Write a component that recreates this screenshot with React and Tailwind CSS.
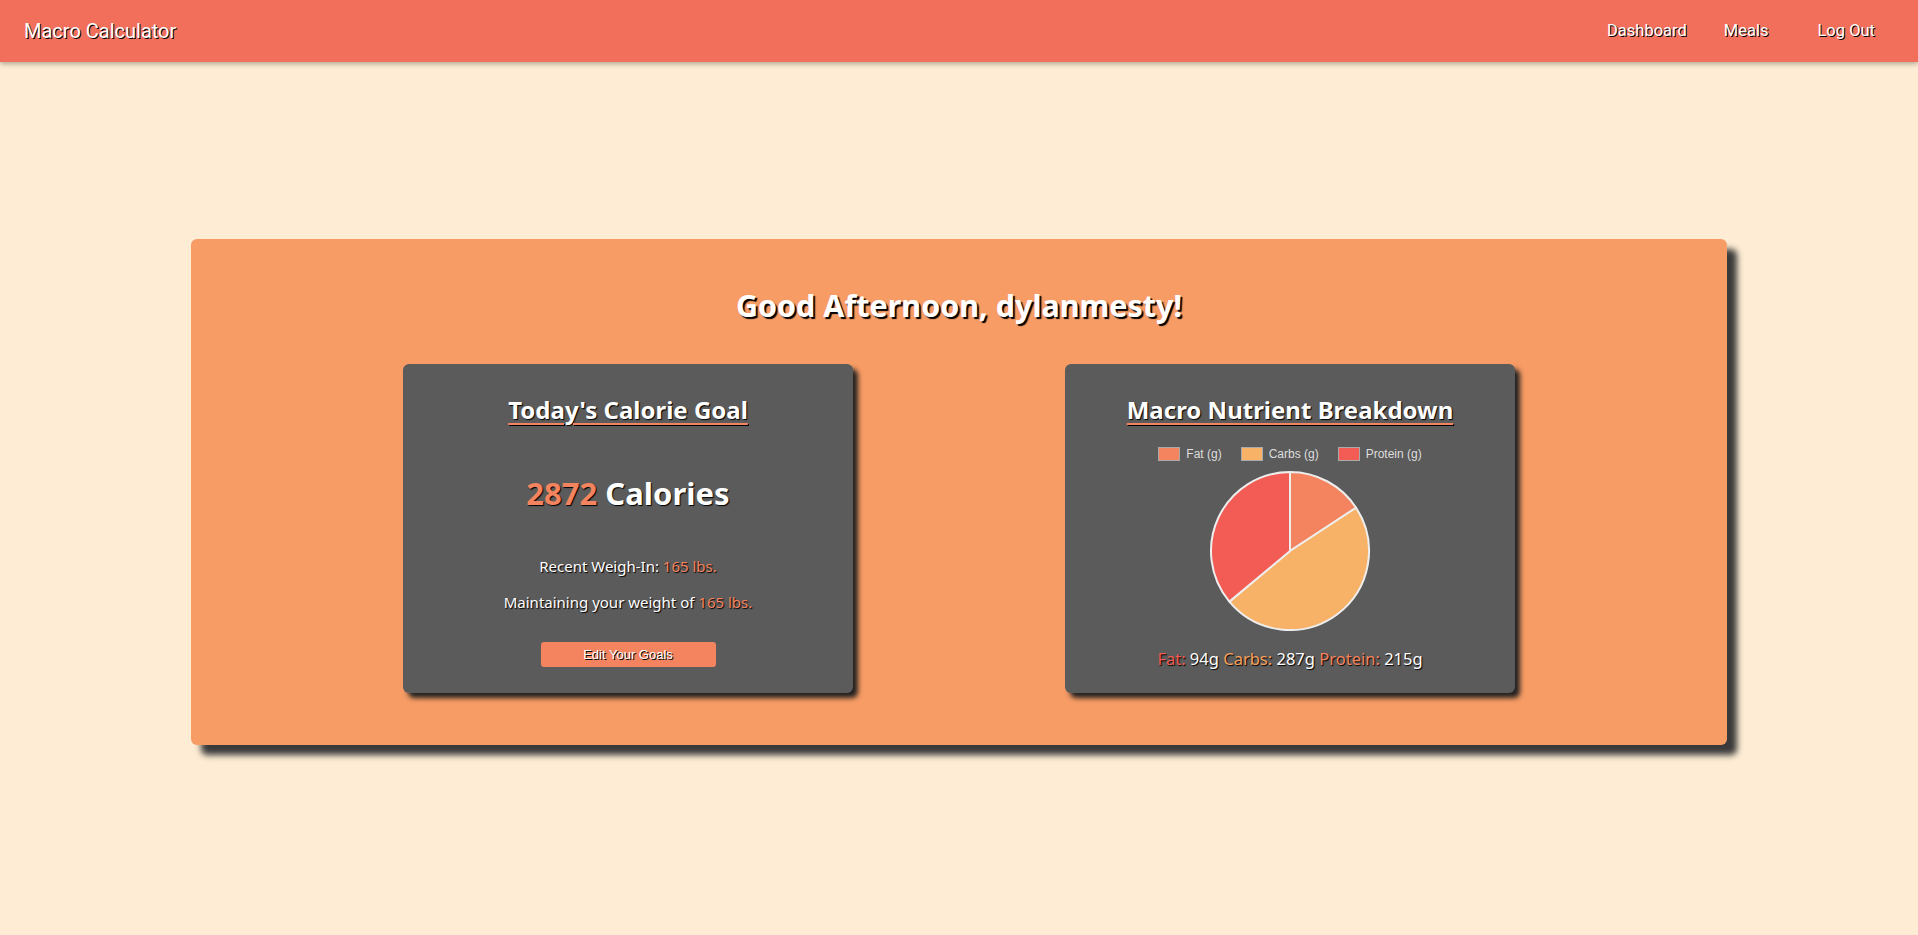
const macros = [
  { label: 'Fat (g)', color: '#F4845F' },
  { label: 'Carbs (g)', color: '#F7B267' },
  { label: 'Protein (g)', color: '#F25C54' },
];

function PieChart() {
  return (
    <svg width="170" height="170" viewBox="0 0 170 170">
      <g stroke="#eeeeee" strokeWidth="2" strokeLinejoin="round">
        <path d="M85,85 L85,6 A79,79 0 0 1 151.1,41.73 Z" fill="#F4845F" />
        <path d="M85,85 L151.1,41.73 A79,79 0 0 1 24.36,135.63 Z" fill="#F7B267" />
        <path d="M85,85 L24.36,135.63 A79,79 0 0 1 85,6 Z" fill="#F25C54" />
      </g>
    </svg>
  );
}

export default function App() {
  const shadow = '[text-shadow:1px_1px_1px_#000]';

  return (
    <div className="min-h-screen bg-[#FEEDD4] font-['Noto_Sans',sans-serif]">
      {/* Navbar */}
      <nav className="h-[62px] bg-[#F26F5C] flex items-center justify-between pl-6 pr-[43px] shadow-[0_2px_5px_rgba(0,0,0,0.3)] font-['Roboto',sans-serif] text-white">
        <span className="text-[20px] [text-shadow:1px_1px_0_#000]">Macro Calculator</span>
        <div className="flex items-center text-[16.5px] [text-shadow:1px_1px_0_#000]">
          <a>Dashboard</a>
          <a className="ml-[37px]">Meals</a>
          <a className="ml-[49px]">Log Out</a>
        </div>
      </nav>

      {/* Main panel */}
      <div className="mt-[177px] mx-auto w-[1536px] h-[506px] rounded-md bg-[#F79C65] shadow-[10px_10px_6px_#3a3a3a] pt-[46px]">
        <h1 className="text-center text-white font-bold text-[30.5px] leading-[40px] [text-shadow:2px_2px_1px_#000]">
          Good Afternoon, dylanmesty!
        </h1>

        <div className="mt-[39px] flex justify-evenly">
          {/* Calorie card */}
          <div className="w-[450px] h-[329px] rounded-md bg-[#5B5B5B] shadow-[5px_5px_5px_#222] flex flex-col items-center text-white pt-[30px]">
            <h2 className={`text-[24px] font-bold leading-8 underline decoration-[#F4845F] decoration-2 underline-offset-4 ${shadow}`}>
              Today's Calorie Goal
            </h2>
            <p className={`mt-[47px] text-[31px] font-bold leading-10 ${shadow}`}>
              <span className="text-[#F4845F]">2872</span> Calories
            </p>
            <p className={`mt-[41px] text-[15px] leading-6 ${shadow}`}>
              Recent Weigh-In: <span className="text-[#F4845F]">165 lbs.</span>
            </p>
            <p className={`mt-[12px] text-[15px] leading-6 ${shadow}`}>
              Maintaining your weight of <span className="text-[#F4845F]">165 lbs.</span>
            </p>
            <button className="mt-[28px] w-[175px] h-[25px] rounded-[3px] bg-[#F3845F] text-white text-[13px] font-['Liberation_Sans',sans-serif] [text-shadow:1px_1px_0_#000]">
              Edit Your Goals
            </button>
          </div>

          {/* Macro card */}
          <div className="w-[450px] h-[329px] rounded-md bg-[#5B5B5B] shadow-[5px_5px_5px_#222] flex flex-col items-center text-white pt-[30px]">
            <h2 className={`text-[24px] font-bold leading-8 underline decoration-[#F4845F] decoration-2 underline-offset-4 ${shadow}`}>
              Macro Nutrient Breakdown
            </h2>
            <div className="mt-[20px] flex items-center gap-[19px] font-['Liberation_Sans',sans-serif] text-[12px] leading-4 text-[#dddddd]">
              {macros.map((m) => (
                <div key={m.label} className="flex items-center gap-[6px]">
                  <span
                    className="w-[22px] h-[14px] border border-[#aaaaaa]"
                    style={{ backgroundColor: m.color }}
                  />
                  <span>{m.label}</span>
                </div>
              ))}
            </div>
            <div className="mt-[4px] h-[170px]">
              <PieChart />
            </div>
            <p className={`mt-[11px] text-[16.5px] leading-6 ${shadow}`}>
              <span className="text-[#F25C54]">Fat:</span> 94g{' '}
              <span className="text-[#F7A25C]">Carbs:</span> 287g{' '}
              <span className="text-[#F4845F]">Protein:</span> 215g
            </p>
          </div>
        </div>
      </div>
    </div>
  );
}
